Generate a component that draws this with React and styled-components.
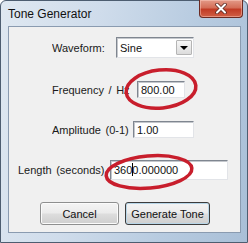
import React from "react";
import styled, { createGlobalStyle } from "styled-components";

const Global = createGlobalStyle`
  html, body { margin: 0; padding: 0; background: #fff; overflow: hidden; }
  * { box-sizing: border-box; }
`;

const Window = styled.div`
  position: relative;
  width: 248px;
  height: 243px;
  display: flex;
  flex-direction: column;
  border: 1px solid #4d5d70;
  border-radius: 6px 6px 0 0;
  background: linear-gradient(100deg, #dfe8f1 0%, #cfdceb 35%, #b7cbe0 70%, #a9bfd7 100%);
  font-family: "Liberation Sans", Arial, sans-serif;
  color: #000;
`;

const TitleBar = styled.div`
  height: 25px;
  display: flex;
  justify-content: space-between;
  align-items: flex-start;
  padding-left: 7px;
  padding-right: 4px;
`;

const Title = styled.span`
  margin-top: 6px;
  font-size: 12px;
  line-height: 14px;
  color: #111;
`;

const CloseButton = styled.div`
  width: 44px;
  height: 18px;
  margin-top: -1px;
  display: flex;
  align-items: center;
  justify-content: center;
  border: 1px solid #6b2a22;
  border-top: none;
  border-radius: 0 0 4px 4px;
  background: linear-gradient(180deg, #e39a88 0%, #d46e58 45%, #c13b25 55%, #d05f45 100%);
  box-shadow: inset 0 0 0 1px rgba(255, 210, 200, 0.45);
`;

const Client = styled.div`
  flex: 1;
  margin: 0 6px 9px 7px;
  background: #f0f0f0;
  border: 1px solid #8a9bb0;
  display: flex;
  flex-direction: column;
`;

const Row = styled.div`
  display: flex;
  align-items: center;
  height: ${(p) => p.$h}px;
  margin-top: ${(p) => p.$top}px;
  padding-left: ${(p) => p.$indent}px;
`;

const Label = styled.span`
  width: ${(p) => p.$w}px;
  flex: none;
  overflow: hidden;
  white-space: nowrap;
  font-size: 11px;
  line-height: 14px;
  word-spacing: 1.5px;
  color: #1a1a1a;
`;

const Field = styled.div`
  width: ${(p) => p.$w}px;
  height: 100%;
  flex: none;
  display: flex;
  align-items: center;
  background: #fff;
  border-style: solid;
  border-width: 1px;
  border-color: #7f8690 #e2e4e8 #e2e4e8 #7f8690;
  box-shadow: inset 1px 1px 0 #c4c7cc;
  padding-left: 3px;
  font-size: 11px;
  line-height: 14px;
  color: #111;
`;

const Caret = styled.span`
  display: inline-block;
  width: 1px;
  height: 13px;
  margin: 0 -1px 0 0;
  background: #000;
  vertical-align: -2px;
`;

const DropButton = styled.div`
  margin-left: auto;
  margin-right: 1px;
  width: 16px;
  height: 15px;
  display: flex;
  align-items: center;
  justify-content: center;
  background: linear-gradient(180deg, #f7f7f7, #dcdcdc);
  border: 1px solid #b5b5b5;
  border-radius: 1px;
`;

const Arrow = styled.span`
  width: 0;
  height: 0;
  border-left: 4px solid transparent;
  border-right: 4px solid transparent;
  border-top: 4px solid #000;
`;

const ButtonRow = styled.div`
  display: flex;
  gap: 6px;
  margin-top: 22px;
  padding-left: 31px;
`;

const Button = styled.div`
  width: ${(p) => p.$w}px;
  height: 23px;
  display: flex;
  align-items: center;
  justify-content: center;
  border: 1px solid ${(p) => (p.$default ? "#3c3c3c" : "#8e8f8f")};
  border-radius: 3px;
  background: linear-gradient(180deg, #f4f4f4 0%, #ebebeb 48%, #dddddd 52%, #cfcfcf 100%);
  box-shadow: inset 0 0 0 1px ${(p) => (p.$default ? "#b8d6e8" : "#fbfbfb")};
  font-size: 11px;
  color: #111;
`;

const Marks = styled.svg`
  position: absolute;
  left: 0;
  top: 0;
  pointer-events: none;
`;

export default function App() {
  return (
    <>
      <Global />
      <Window>
        <TitleBar>
          <Title>Tone Generator</Title>
          <CloseButton>
            <svg width="12" height="11" viewBox="0 0 12 11">
              <path d="M2 1.5 L10 9.5 M10 1.5 L2 9.5" stroke="#5a2a24" strokeWidth="3.6" strokeLinecap="round" />
              <path d="M2 1.5 L10 9.5 M10 1.5 L2 9.5" stroke="#fff" strokeWidth="2" strokeLinecap="round" />
            </svg>
          </CloseButton>
        </TitleBar>
        <Client>
          <Row $top={10} $h={21} $indent={43}>
            <Label $w={64}>Waveform:</Label>
            <Field $w={78}>
              Sine
              <DropButton>
                <Arrow />
              </DropButton>
            </Field>
          </Row>
          <Row $top={23} $h={17} $indent={43}>
            <Label $w={85}>Frequency / Hz</Label>
            <Field $w={48}>800.00</Field>
          </Row>
          <Row $top={23} $h={17} $indent={43}>
            <Label $w={81}>Amplitude (0-1)</Label>
            <Field $w={61}>1.00</Field>
          </Row>
          <Row $top={22} $h={20} $indent={9}>
            <Label $w={92}>Length (seconds)</Label>
            <Field $w={118}>
              <span>
                360
                <Caret />
                0.000000
              </span>
            </Field>
          </Row>
          <ButtonRow>
            <Button $w={79}>Cancel</Button>
            <Button $w={85} $default>
              Generate Tone
            </Button>
          </ButtonRow>
        </Client>
        <Marks width="248" height="243" viewBox="0 0 248 243">
          <ellipse cx="160" cy="88" rx="35" ry="19" transform="rotate(-6 160 88)" fill="none" stroke="#c81e2c" strokeWidth="3.5" />
          <ellipse cx="148" cy="171" rx="43" ry="16" transform="rotate(-5 148 171)" fill="none" stroke="#c81e2c" strokeWidth="3.5" />
        </Marks>
      </Window>
    </>
  );
}
